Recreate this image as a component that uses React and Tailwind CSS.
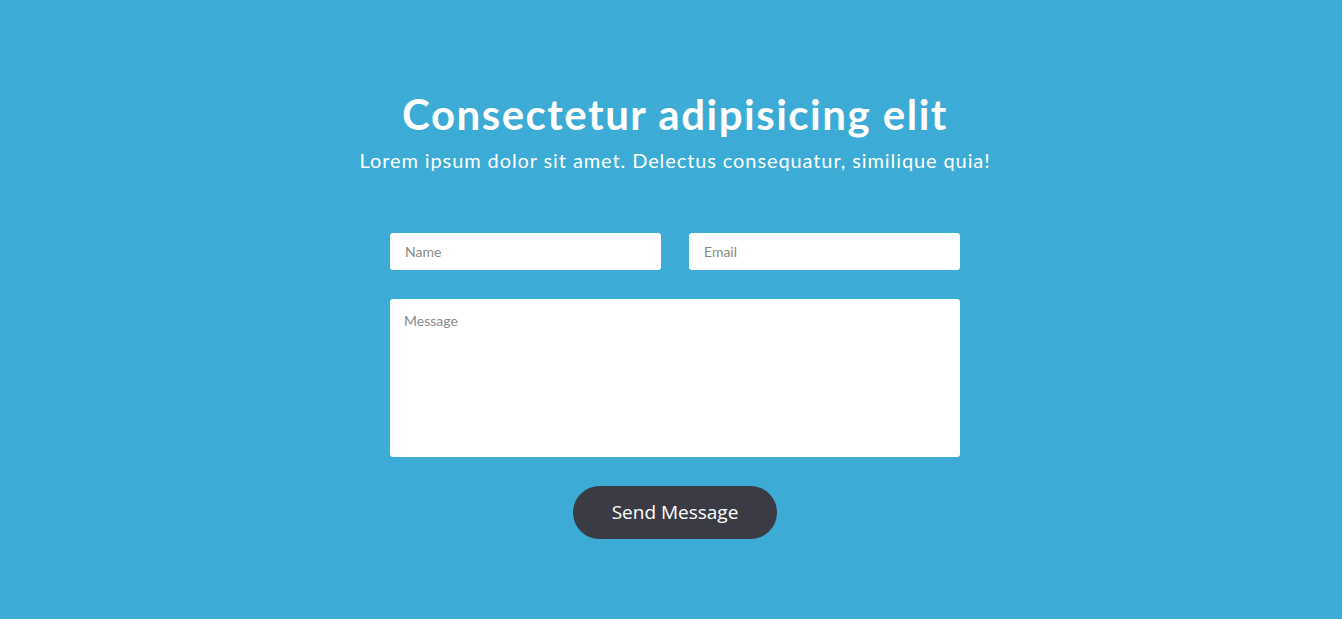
import React from 'react';

const App = () => {
    return (
        <div className="min-h-[619px] w-full bg-[#3cacd6] pl-2 pt-[88px] font-['Lato','Open_Sans',sans-serif]">
            <div className="flex flex-col items-center">
                <h1 className="text-[42px] font-bold leading-[52px] tracking-[1.5px] text-white">Consectetur adipisicing elit</h1>
                <p className="mt-[6px] text-[20px] leading-[28px] tracking-[0.9px] text-white">
                    Lorem ipsum dolor sit amet. Delectus consequatur, similique quia!
                </p>

                {/* Form */}
                <form className="mt-[59px] flex w-[570px] flex-col items-center">
                    <div className="grid w-full grid-cols-2 gap-[28px]">
                        <input
                            type="text"
                            placeholder="Name"
                            className="h-[37px] rounded-[3px] bg-white px-[15px] text-[14px] text-gray-700 placeholder:text-[#8a8a8a] outline-none"
                        />
                        <input
                            type="email"
                            placeholder="Email"
                            className="h-[37px] rounded-[3px] bg-white px-[15px] text-[14px] text-gray-700 placeholder:text-[#8a8a8a] outline-none"
                        />
                    </div>
                    <textarea
                        placeholder="Message"
                        className="mt-[29px] h-[158px] w-full resize-none rounded-[3px] bg-white px-[14px] py-[11px] text-[14px] text-gray-700 placeholder:text-[#8a8a8a] outline-none"
                    />
                    <button
                        type="button"
                        className="mt-[29px] h-[53px] w-[204px] rounded-full bg-[#3a3b45] text-[19px] text-white font-['Open_Sans',sans-serif]"
                    >
                        Send Message
                    </button>
                </form>
            </div>
        </div>
    );
};

export default App;
